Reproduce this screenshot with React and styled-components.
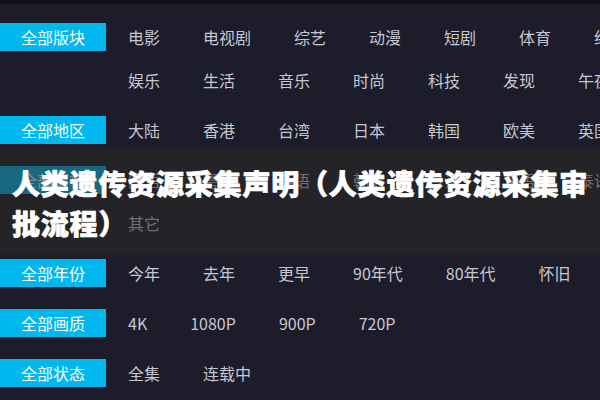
import styled, { createGlobalStyle } from "styled-components";

const GlobalStyle = createGlobalStyle`
  html, body {
    margin: 0;
    padding: 0;
    background: #1c1c2b;
    overflow: hidden;
  }
  * {
    box-sizing: border-box;
  }
`;

const filters = [
  {
    label: "全部版块",
    options: [
      "电影", "电视剧", "综艺", "动漫", "短剧", "体育", "纪录片",
      "娱乐", "生活", "音乐", "时尚", "科技", "发现", "午夜",
    ],
  },
  {
    label: "全部地区",
    options: ["大陆", "香港", "台湾", "日本", "韩国", "欧美", "英国"],
  },
  {
    label: "全部语言",
    options: ["国语", "粤语", "英语", "韩语", "日语", "法语", "泰语", "其它"],
  },
  {
    label: "全部年份",
    options: ["今年", "去年", "更早", "90年代", "80年代", "怀旧"],
  },
  {
    label: "全部画质",
    options: ["4K", "1080P", "900P", "720P"],
  },
  {
    label: "全部状态",
    options: ["全集", "连载中"],
  },
];

export default function App() {
  return (
    <>
      <GlobalStyle />
      <Page>
        <TopStrip />
        <FilterList>
          {filters.map((filter) => (
            <FilterRow key={filter.label}>
              <Label>{filter.label}</Label>
              <Options>
                {filter.options.map((option) => (
                  <Option key={option}>{option}</Option>
                ))}
              </Options>
            </FilterRow>
          ))}
        </FilterList>
        {/* caption band laid over the filter list */}
        <Caption>
          <Title>人类遗传资源采集声明（人类遗传资源采集审批流程）</Title>
        </Caption>
      </Page>
    </>
  );
}

const Page = styled.div`
  position: relative;
  width: 700px;
  height: 400px;
  background: #1c1c2b;
  font-family: "Noto Sans CJK SC", "Noto Sans", sans-serif;
`;

const TopStrip = styled.div`
  height: 4px;
  background: #11111c;
`;

const FilterList = styled.div`
  padding-top: 19px;
`;

const FilterRow = styled.div`
  display: flex;
  align-items: flex-start;
  margin-bottom: 22px;
`;

const Label = styled.div`
  width: 106px;
  flex-shrink: 0;
  height: 28px;
  line-height: 28px;
  background: #00b7ee;
  color: #ffffff;
  font-size: 16px;
  text-align: center;
`;

const Options = styled.div`
  display: flex;
  flex-wrap: wrap;
  width: 532px;
  margin-left: 22px;
  column-gap: 43px;
  row-gap: 15px;
`;

const Option = styled.span`
  height: 28px;
  line-height: 28px;
  font-size: 16px;
  color: #c6c7d1;
  white-space: nowrap;
`;

const Caption = styled.div`
  position: absolute;
  top: 148px;
  left: 0;
  width: 600px;
  height: 107px;
  padding: 15px 6px 12px 12px;
  background: rgba(42, 42, 40, 0.56);
`;

const Title = styled.h1`
  margin: 0;
  font-family: "Noto Sans CJK SC", "Noto Sans", sans-serif;
  font-size: 28px;
  font-weight: 900;
  letter-spacing: 0.8px;
  line-height: 40px;
  color: #ffffff;
  -webkit-text-stroke: 0.7px #ffffff;
`;
